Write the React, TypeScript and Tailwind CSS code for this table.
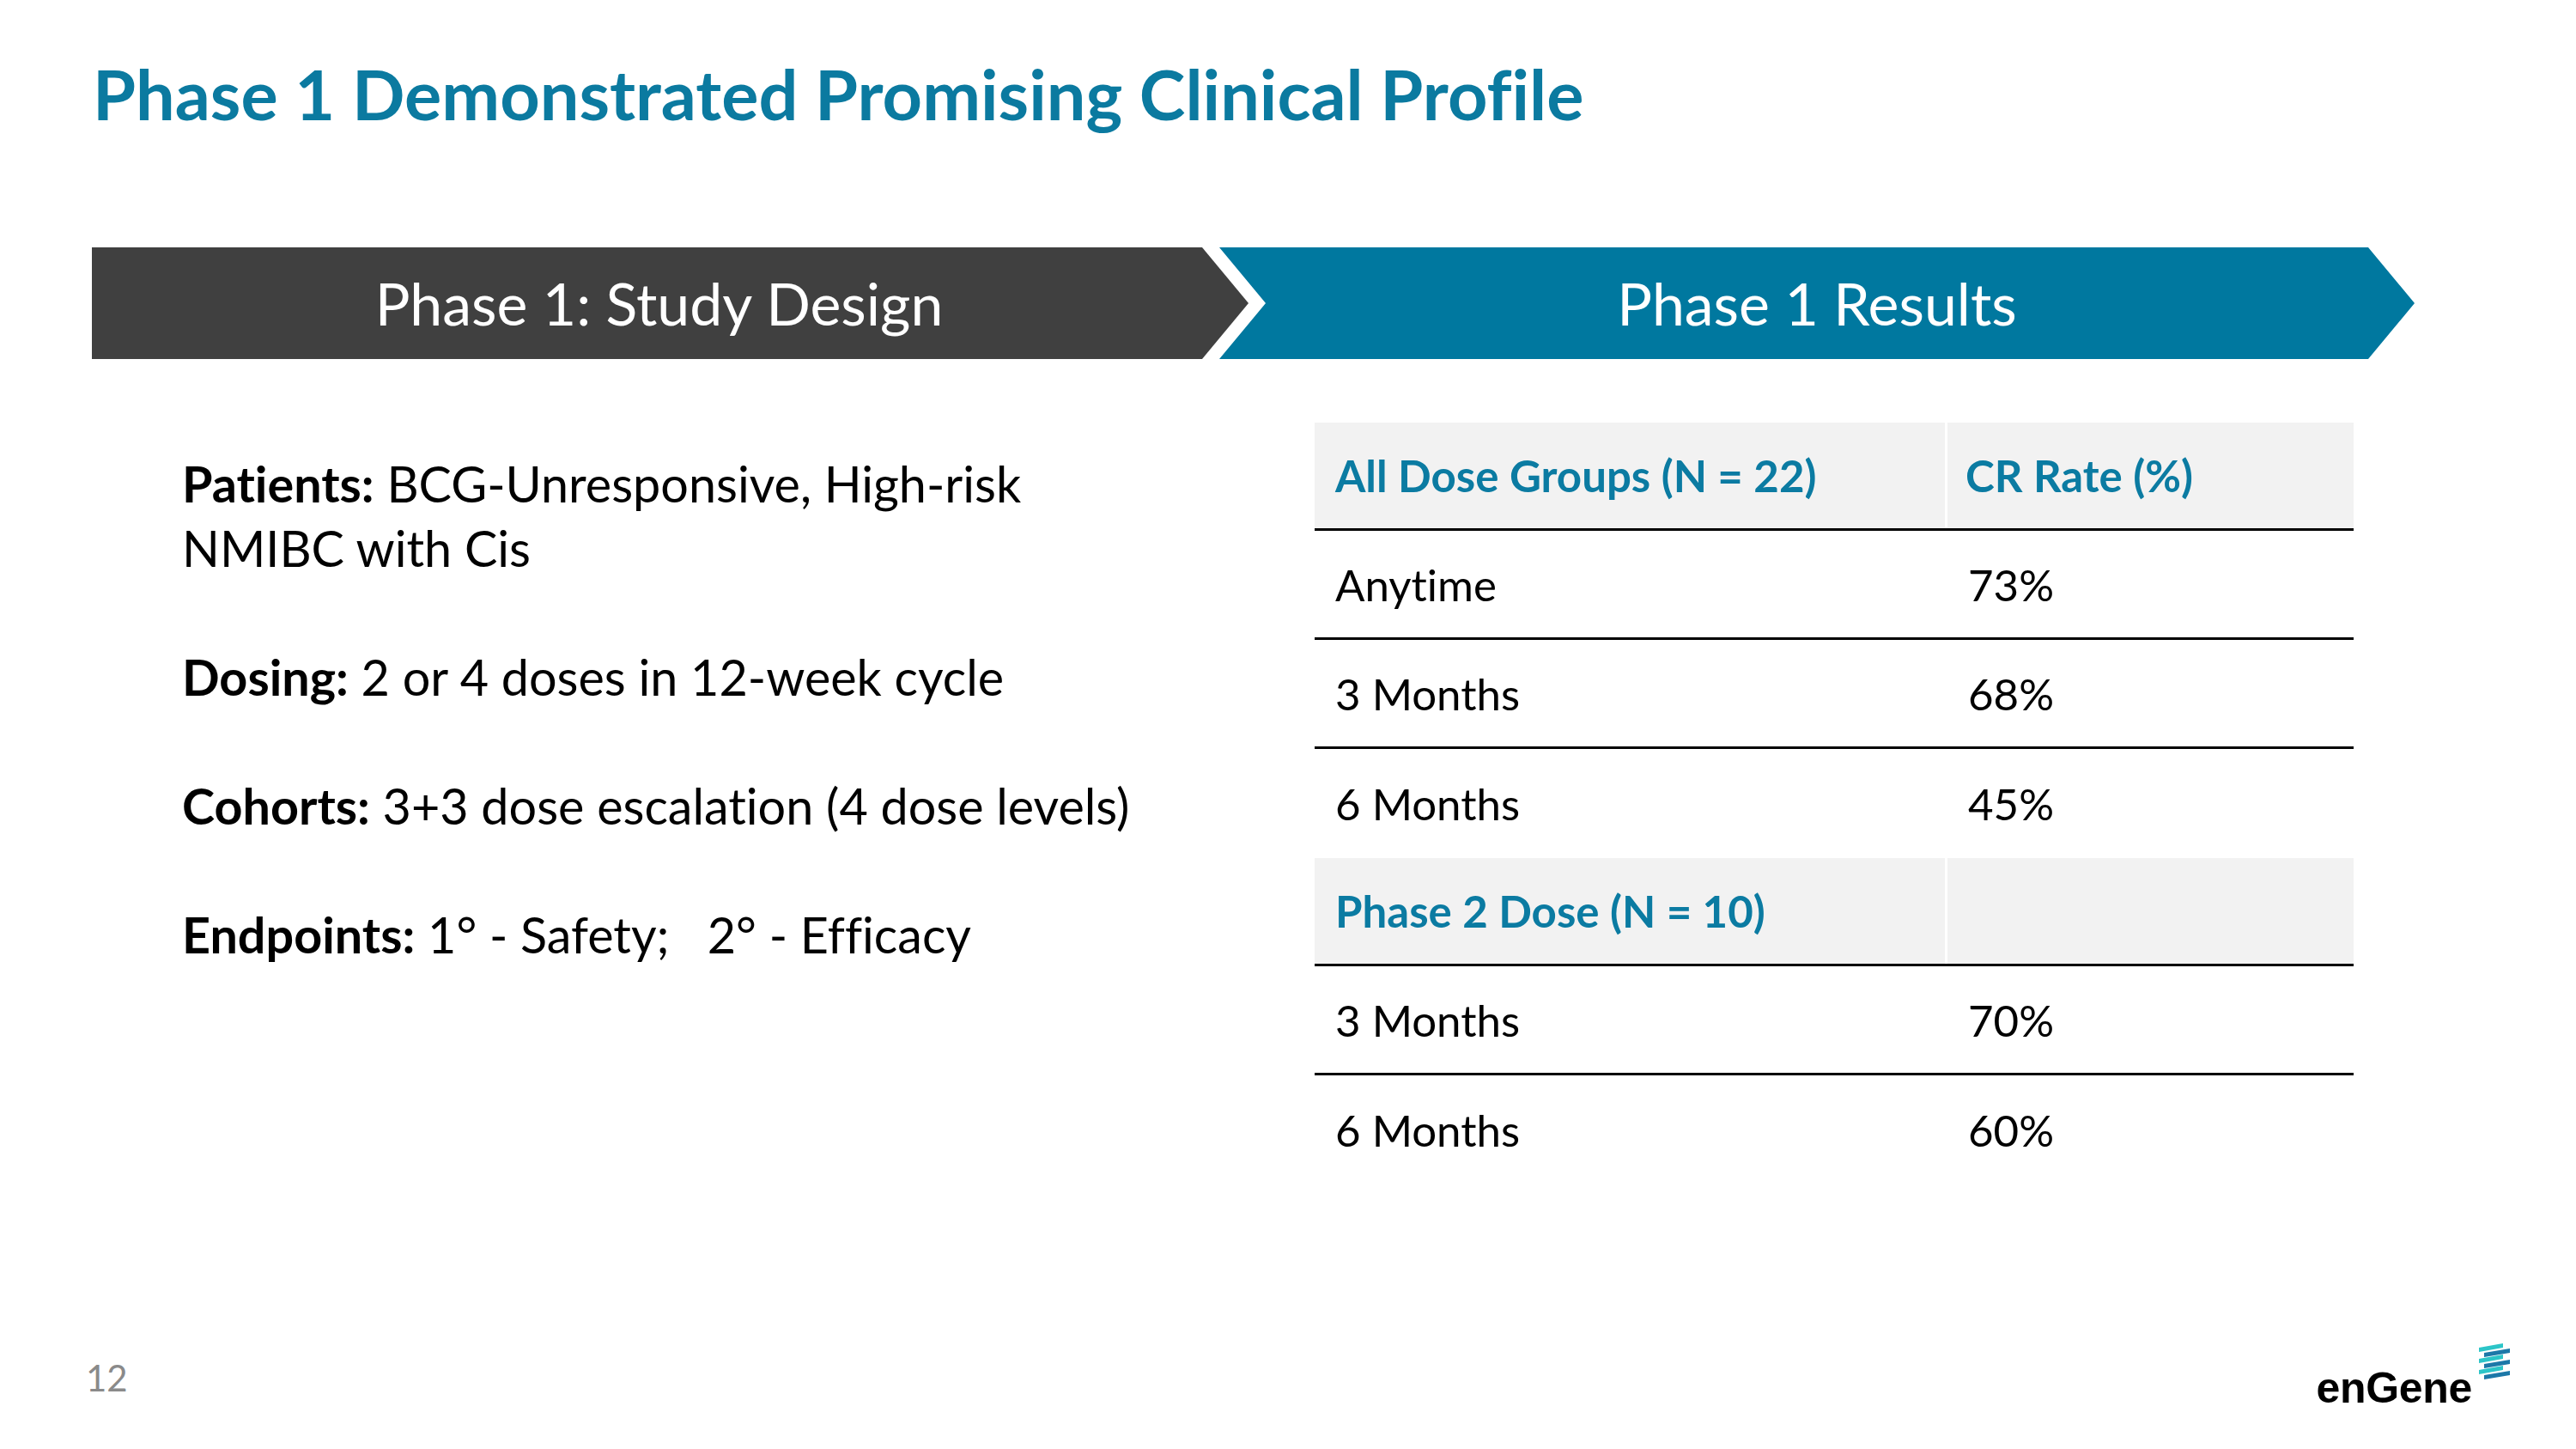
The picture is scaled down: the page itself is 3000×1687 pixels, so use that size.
import React from 'react';

const groups = [
  {
    title: 'All Dose Groups (N = 22)',
    rate: 'CR Rate (%)',
    rows: [
      { label: 'Anytime', value: '73%' },
      { label: '3 Months', value: '68%' },
      { label: '6 Months', value: '45%' },
    ],
  },
  {
    title: 'Phase 2 Dose (N = 10)',
    rate: '',
    rows: [
      { label: '3 Months', value: '70%' },
      { label: '6 Months', value: '60%' },
    ],
  },
];

const designItems = [
  { label: 'Patients:', text: ['BCG-Unresponsive, High-risk', 'NMIBC with Cis'] },
  { label: 'Dosing:', text: ['2 or 4 doses in 12-week cycle'] },
  { label: 'Cohorts:', text: ['3+3 dose escalation (4 dose levels)'] },
  { label: 'Endpoints:', text: ['1° - Safety;   2° - Efficacy'] },
];

const Logo: React.FC = () => (
  <div className="flex items-start">
    <span className="mt-[28px] [font-family:'Liberation_Sans',Arial,sans-serif] text-[50px] font-bold leading-none tracking-[-0.3px] text-black">
      enGene
    </span>
    <svg width="36" height="43" viewBox="0 0 36 43" className="ml-[8px]">
      {/* cyan bars sit left, dark blue bars sit right */}
      <polygon points="0,6 28,1 28,6 0,11" fill="#2cc5c8" />
      <polygon points="6,12 36,7 36,12 6,17" fill="#1c78a8" />
      <polygon points="0,19 28,14 28,19 0,24" fill="#2cc5c8" />
      <polygon points="6,25 36,20 36,25 6,30" fill="#1c78a8" />
      <polygon points="0,32 28,27 28,32 0,37" fill="#2cc5c8" />
      <polygon points="6,38 36,33 36,38 6,43" fill="#1c78a8" />
    </svg>
  </div>
);

export default function App() {
  return (
    <div className="w-[3000px] h-[1687px] bg-white flex flex-col [font-family:Lato,'Open_Sans',sans-serif] [font-variant-ligatures:none] overflow-hidden">
      {/* Title */}
      <div className="h-[288px] pl-[108px] pt-[68px]">
        <h1 className="text-[81px] font-bold leading-none text-[#0b7aa0]">
          Phase 1 Demonstrated Promising Clinical Profile
        </h1>
      </div>

      {/* Chevron headers */}
      <div className="h-[130px] flex pl-[107px]">
        <div className="w-[1347px] h-full bg-[#404040] flex items-center justify-center pr-[26px] [clip-path:polygon(0_0,1293px_0,1347px_50%,1293px_100%,0_100%)]">
          <span className="text-[68px] leading-none text-white">Phase 1: Study Design</span>
        </div>
        <div className="ml-[-34px] w-[1392px] h-full bg-[#00789f] flex items-center justify-center [clip-path:polygon(0_0,1338px_0,1392px_50%,1338px_100%,0_100%,54px_50%)]">
          <span className="text-[68px] leading-none text-white">Phase 1 Results</span>
        </div>
      </div>

      {/* Body */}
      <div className="flex-1 flex">
        <div className="w-[1319px] pl-[212px] pt-[107px] flex flex-col gap-[75px] text-[57.5px] leading-[75px] text-black">
          {designItems.map((item) => (
            <p key={item.label} className="whitespace-pre">
              <span className="font-bold">{item.label}</span>{' '}
              {item.text.map((t, i) => (
                <React.Fragment key={i}>
                  {i > 0 && <br />}
                  {t}
                </React.Fragment>
              ))}
            </p>
          ))}
        </div>

        <div className="pt-[74px] ml-[212px]">
          <div className="w-[1210px]">
            {groups.map((g) => (
              <div key={g.title}>
                <div className="h-[126px] grid grid-cols-[737px_1fr] border-b-[3px] border-black">
                  <div className="bg-[#f2f2f2] border-r-[3px] border-white flex items-center pl-[24px]">
                    <span className="text-[51px] font-bold text-[#0b7ba2] leading-none">{g.title}</span>
                  </div>
                  <div className="bg-[#f2f2f2] flex items-center pl-[21px]">
                    <span className="text-[51px] font-bold text-[#0b7ba2] leading-none">{g.rate}</span>
                  </div>
                </div>
                {g.rows.map((r, i) => (
                  <div
                    key={r.label}
                    className={
                      i < g.rows.length - 1
                        ? 'h-[127px] grid grid-cols-[737px_1fr] border-b-[3px] border-black'
                        : 'h-[127px] grid grid-cols-[737px_1fr]'
                    }
                  >
                    <div className="flex items-center pl-[24px] text-[51px] leading-none text-black">{r.label}</div>
                    <div className="flex items-center pl-[24px] text-[51px] leading-none text-black">{r.value}</div>
                  </div>
                ))}
              </div>
            ))}
          </div>
        </div>
      </div>

      {/* Footer */}
      <div className="h-[127px] flex justify-between items-start pl-[100px] pr-[77px]">
        <span className="mt-[23px] text-[42px] leading-none text-[#8a8a8a]">12</span>
        <div className="mt-[3px]">
          <Logo />
        </div>
      </div>
    </div>
  );
}
